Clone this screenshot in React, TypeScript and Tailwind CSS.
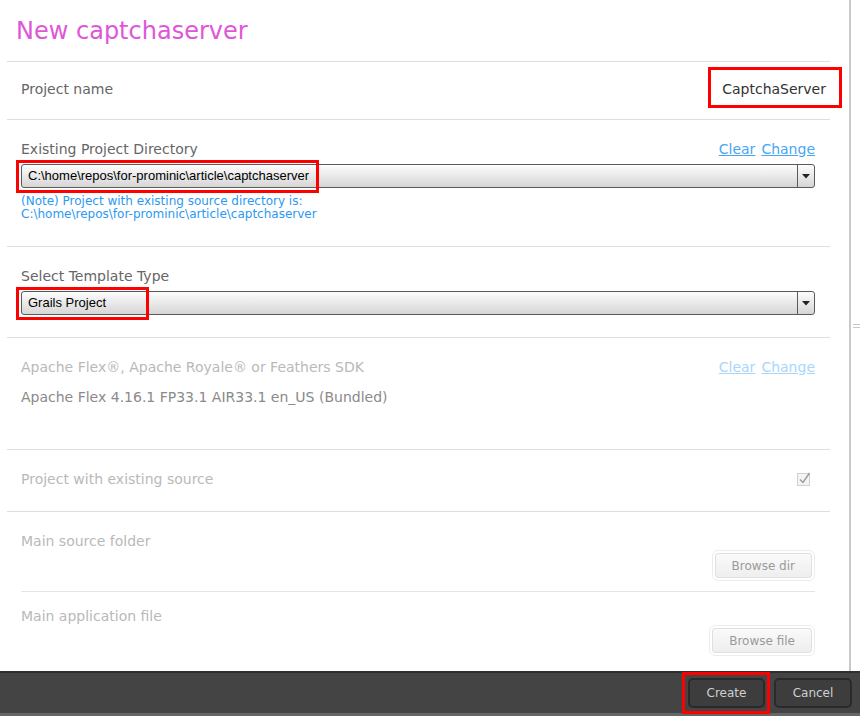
import React from 'react'

const sans = { fontFamily: '"DejaVu Sans", "Noto Sans", sans-serif' }
const arial = { fontFamily: '"Liberation Sans", Arial, sans-serif' }

function Dropdown({ value, markWidth }: { value: string; markWidth: number }) {
  return (
    <div className="relative mt-[6px] flex h-[24px] w-full rounded-[3px] border border-[#5a5a5a] bg-gradient-to-b from-[#fdfdfd] to-[#d6d6d6]">
      <div className="flex flex-1 items-center pl-[6px] text-[13px] text-black" style={arial}>
        {value}
      </div>
      <div className="flex w-[17px] items-center justify-center border-l border-[#5a5a5a]">
        <svg width="8" height="5" viewBox="0 0 8 5">
          <path d="M0 0 H8 L4 4.5 Z" fill="#222" />
        </svg>
      </div>
      <div
        className="pointer-events-none absolute top-[-5px] left-[-6px] h-[33px] border-[3px] border-[#ff0000]"
        style={{ width: markWidth }}
      />
    </div>
  )
}

function Links({ faded }: { faded?: boolean }) {
  const c = faded ? 'text-[#a9d7fb]' : 'text-[#47a6f5]'
  return (
    <div className={`flex gap-[6px] text-[14px] underline ${c}`}>
      <span>Clear</span>
      <span>Change</span>
    </div>
  )
}

function BrowseButton({ label }: { label: string }) {
  return (
    <div className="rounded-[6px] border border-[#ececec] p-[2px]">
      <div className="flex h-[25px] items-center rounded-[3px] border border-[#e0e0e0] bg-gradient-to-b from-[#fafafa] to-[#eeeeee] px-[16px] text-[12px] text-[#9a9a9a]">
        {label}
      </div>
    </div>
  )
}

export default function App() {
  return (
    <div className="flex h-[716px] w-[860px] flex-col overflow-hidden bg-white" style={sans}>
      <div className="flex flex-1">
        <div className="w-[849px]">
          <div className="ml-[7px] mr-[19px] h-[62px] border-b border-[#dedede] pl-[9px] pt-[19px]">
            <h1 className="text-[24px] leading-none text-[#e056d8]">New captchaserver</h1>
          </div>

          <div className="ml-[7px] mr-[19px] flex h-[58px] items-center justify-between border-b border-[#dedede] pl-[14px]">
            <span className="-mt-[3px] text-[14px] text-[#666]">Project name</span>
            <div className="relative mr-[4px] -mt-[3px] text-[14px] text-[#333]">
              CaptchaServer
              <div className="pointer-events-none absolute top-[-12px] left-[-14px] right-[-16px] h-[41px] border-[3px] border-[#ff0000]" />
            </div>
          </div>

          <div className="ml-[7px] mr-[19px] h-[127px] border-b border-[#dedede] pl-[14px] pr-[15px] pt-[20px]">
            <div className="flex h-[18px] items-center justify-between">
              <span className="text-[14px] text-[#666]">Existing Project Directory</span>
              <Links />
            </div>
            <Dropdown value="C:\home\repos\for-prominic\article\captchaserver" markWidth={303} />
            <div className="mt-[7px] text-[12px] leading-[13px] text-[#2b99f3]">
              <div>(Note) Project with existing source directory is:</div>
              <div>C:\home\repos\for-prominic\article\captchaserver</div>
            </div>
          </div>

          <div className="ml-[7px] mr-[19px] h-[91px] border-b border-[#dedede] pl-[14px] pr-[15px] pt-[20px]">
            <div className="flex h-[18px] items-center">
              <span className="text-[14px] text-[#666]">Select Template Type</span>
            </div>
            <Dropdown value="Grails Project" markWidth={133} />
          </div>

          <div className="ml-[7px] mr-[19px] h-[112px] border-b border-[#dedede] pl-[14px] pr-[15px] pt-[20px]">
            <div className="flex h-[18px] items-center justify-between">
              <span className="text-[14px] text-[#b9b9b9]">Apache Flex®, Apache Royale® or Feathers SDK</span>
              <Links faded />
            </div>
            <div className="mt-[12px] flex h-[18px] items-center text-[14px] text-[#8a8a8a]">
              Apache Flex 4.16.1 FP33.1 AIR33.1 en_US (Bundled)
            </div>
          </div>

          <div className="ml-[7px] mr-[19px] flex h-[62px] items-center justify-between border-b border-[#dedede] pl-[14px] pr-[19px]">
            <span className="-mt-[3px] text-[14px] text-[#b9b9b9]">Project with existing source</span>
            <svg width="14" height="14" viewBox="0 0 14 14" className="-mt-[4px]">
              <rect x="0.5" y="1.5" width="12" height="12" fill="#f4f4f4" stroke="#d0d0d0" />
              <path d="M3 7.5 L6 10.5 L12.5 1" fill="none" stroke="#9a9a9a" strokeWidth="1.4" />
            </svg>
          </div>

          <div className="ml-[7px] mr-[19px] h-[80px] pl-[14px] pr-[15px] pt-[20px]">
            <div className="flex h-[18px] items-center text-[14px] text-[#b9b9b9]">Main source folder</div>
            <div className="flex justify-end">
              <BrowseButton label="Browse dir" />
            </div>
            <div className="mt-[10px] border-b border-[#e4e4e4]" />
          </div>

          <div className="ml-[7px] mr-[19px] h-[79px] pl-[14px] pr-[15px] pt-[15px]">
            <div className="flex h-[18px] items-center text-[14px] text-[#b9b9b9]">Main application file</div>
            <div className="flex justify-end">
              <BrowseButton label="Browse file" />
            </div>
          </div>
        </div>

        <div className="flex w-[11px] flex-col items-end border-l-2 border-[#c9c9c9] bg-white">
          <div className="mt-[324px] flex w-[7px] flex-col gap-[2px]">
            <div className="h-px bg-[#c8c8c8]" />
            <div className="h-px bg-[#c8c8c8]" />
          </div>
        </div>
      </div>

      <div className="flex h-[45px] flex-col border-t-2 border-[#2f2f2f] bg-[#444]">
        <div className="flex flex-1 items-start justify-end gap-[9px] pr-[8px] pt-[5px]">
          <div className="relative">
            <button className="flex h-[30px] w-[77px] items-center justify-center rounded-[5px] border-2 border-[#2a2a2a] bg-[#3d3d3d] text-[12px] text-[#cfcfcf]">
              Create
            </button>
            <div className="pointer-events-none absolute top-[-6px] left-[-6px] h-[42px] w-[88px] border-[3px] border-[#ff0000]" />
          </div>
          <button className="flex h-[30px] w-[78px] items-center justify-center rounded-[5px] border-2 border-[#2a2a2a] bg-[#3d3d3d] text-[12px] text-[#cfcfcf]">
            Cancel
          </button>
        </div>
        <div className="h-[3px] bg-[#666]" />
      </div>
    </div>
  )
}
